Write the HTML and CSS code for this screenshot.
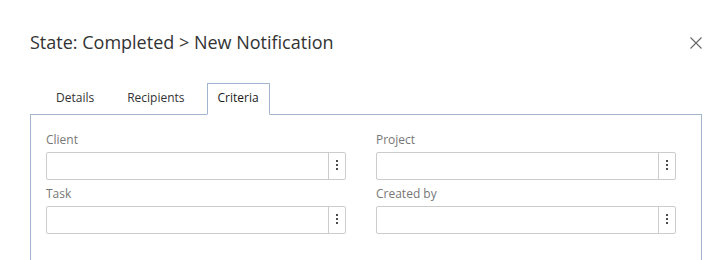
FILE: index.html
```html
<!DOCTYPE html>
<html lang="en">

<head>
    <meta charset="UTF-8">
    <meta name="viewport" content="width=device-width, initial-scale=1.0">
    <title>New Notification</title>
    <link rel="stylesheet" href="styles.css">
</head>

<body>
    <div class="dialog">
        <div class="dialog-header">
            <h1 class="dialog-title">State: Completed &gt; New Notification</h1>
            <button class="close-btn" aria-label="Close">
                <svg width="12" height="12" viewBox="0 0 12 12">
                    <path d="M0.5 0.5 L11.5 11.5 M11.5 0.5 L0.5 11.5" stroke="#666" stroke-width="1.1" fill="none"/>
                </svg>
            </button>
        </div>

        <ul class="tabs">
            <li class="tab">Details</li>
            <li class="tab">Recipients</li>
            <li class="tab active">Criteria</li>
        </ul>

        <div class="tab-panel">
            <div class="field-grid">
                <div class="field">
                    <label class="field-label">Client</label>
                    <div class="picker">
                        <input type="text" class="picker-input">
                        <span class="picker-btn"><i></i><i></i><i></i></span>
                    </div>
                </div>
                <div class="field">
                    <label class="field-label">Project</label>
                    <div class="picker">
                        <input type="text" class="picker-input">
                        <span class="picker-btn"><i></i><i></i><i></i></span>
                    </div>
                </div>
                <div class="field">
                    <label class="field-label">Task</label>
                    <div class="picker">
                        <input type="text" class="picker-input">
                        <span class="picker-btn"><i></i><i></i><i></i></span>
                    </div>
                </div>
                <div class="field">
                    <label class="field-label">Created by</label>
                    <div class="picker">
                        <input type="text" class="picker-input">
                        <span class="picker-btn"><i></i><i></i><i></i></span>
                    </div>
                </div>
            </div>
        </div>
    </div>
</body>
</html>
```

FILE: styles.css
```css
body {
    margin: 0;
    background: #fff;
    font-family: "Open Sans", "Noto Sans", sans-serif;
    color: #333;
}

.dialog {
    padding: 30px 16px 0 30px;
}

.dialog-header {
    display: flex;
    justify-content: space-between;
    align-items: flex-start;
}

.dialog-title {
    margin: 0;
    font-size: 18px;
    line-height: 24px;
    font-weight: normal;
    color: #333;
}

.close-btn {
    border: none;
    background: none;
    padding: 0;
    margin-top: 7px;
    width: 12px;
    height: 12px;
    display: flex;
}

.tabs {
    list-style: none;
    margin: 29px 0 -1px 0;
    padding: 0 0 0 15px;
    display: flex;
    gap: 11px;
}

.tab {
    font-size: 12px;
    line-height: 18px;
    padding: 5px 10px 7px;
    border: 1px solid transparent;
    color: #333;
}

.tab.active {
    border-color: #a3b5ce;
    border-bottom-color: #fff;
    background: #fff;
    color: #1a1a1a;
    position: relative;
}

.tab-panel {
    box-sizing: border-box;
    height: 146px;
    border: 1px solid #a3b5ce;
    border-bottom: none;
    padding: 17px 18px 0 15px;
}

.field-grid {
    display: grid;
    grid-template-columns: 300px 300px;
    column-gap: 30px;
    row-gap: 6px;
}

.field-label {
    display: block;
    font-size: 12px;
    line-height: 16px;
    color: #777;
    margin-bottom: 4px;
}

.picker {
    display: flex;
    height: 28px;
    border: 1px solid #ccc;
    border-radius: 2px;
    box-sizing: border-box;
}

.picker-input {
    flex: 1;
    border: none;
    outline: none;
    min-width: 0;
    padding: 0 6px;
    background: transparent;
}

.picker-btn {
    width: 16px;
    border-left: 1px solid #ccc;
    display: flex;
    flex-direction: column;
    align-items: center;
    justify-content: center;
    gap: 2px;
    padding-bottom: 2px;
}

.picker-btn i {
    width: 2px;
    height: 2px;
    background: #111;
    border-radius: 1px;
}
```
